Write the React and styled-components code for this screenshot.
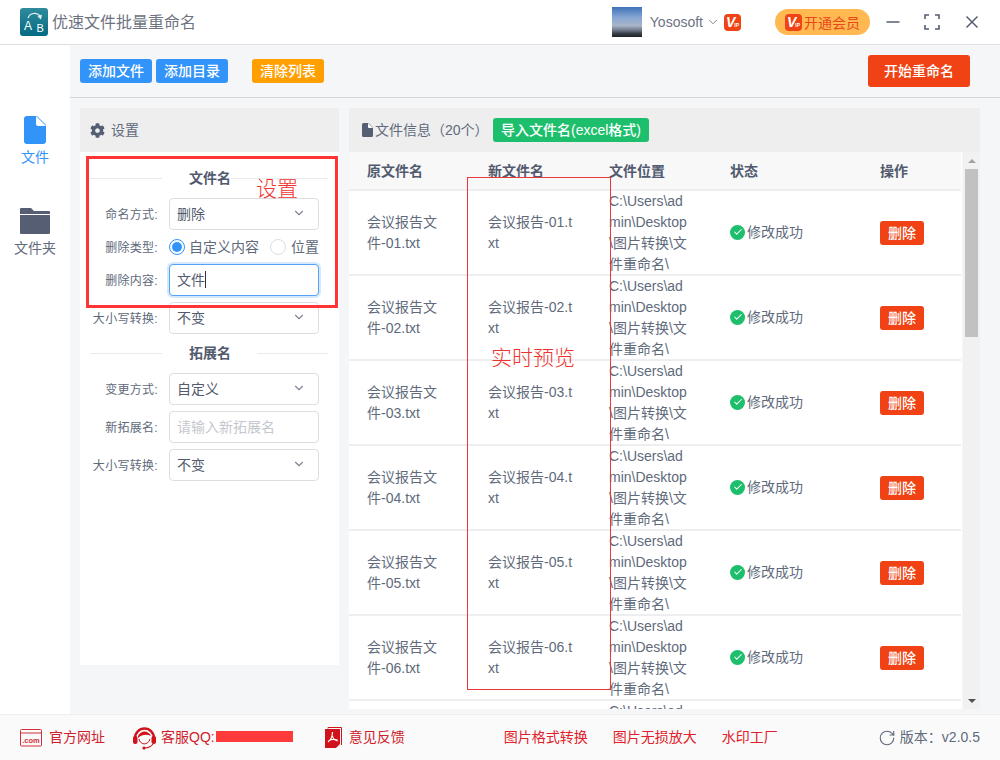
import React from "react";
import styled, { createGlobalStyle } from "styled-components";
import { ChevronDown, RotateCw, Check } from "lucide-react";
import { FaCog } from "react-icons/fa";

const Global = createGlobalStyle`
  html, body { margin: 0; padding: 0; background: #fff; }
  * { box-sizing: border-box; }
  body { font-family: "Liberation Sans", "Noto Sans CJK SC", sans-serif; color: #606a7b; font-size: 14px; }
`;

const Page = styled.div`
  position: relative; width: 1000px; height: 760px; overflow: hidden;
  display: flex; flex-direction: column; background: #fff;
`;

/* title bar */
const TitleBar = styled.header`
  height: 45px; flex: none; display: flex; align-items: center; padding-right: 20px;
  border-bottom: 1px solid #dcdee2; background: #fff;
`;
const LogoWrap = styled.div`margin-left: 20px; width: 28px; height: 28px; flex: none;`;
const AppName = styled.div`margin-left: 4px; font-size: 16px; color: #6d7382; flex: 1; padding-bottom: 2px;`;
const Avatar = styled.div`
  width: 30px; height: 30px; flex: none;
  background: linear-gradient(180deg, #3f72b8 0%, #86a6d4 35%, #a9b4c8 62%, #6b7585 78%, #39404a 88%, #1e2226 100%);
`;
const UserName = styled.div`margin-left: 8px; color: #6d7382; font-size: 14px; display: flex; align-items: center; gap: 3px;`;
const VipBadge = styled.div`
  width: 17px; height: 17px; border-radius: 4px; background: #f04215; flex: none;
  color: #fff; display: flex; align-items: center; justify-content: center; overflow: hidden;
  margin-left: ${p => p.$ml || 0}px;
`;
const VipV = styled.span`font: italic 700 14px "Liberation Sans", sans-serif; line-height: 1;`;
const VipIP = styled.span`font: 700 5px "Liberation Sans", sans-serif; margin-top: 6px; margin-left: -1px;`;
const MemberPill = styled.div`
  margin-left: 34px; width: 95px; height: 26px; border-radius: 13px; background: #ffb950; flex: none;
  display: flex; align-items: center; padding-left: 10px; gap: 2px; color: #e8471a; font-size: 14px;
`;
const WinBtn = styled.svg`width: 16px; height: 16px; flex: none; margin-left: ${p => p.$ml}px; display: block;`;

/* body */
const Body = styled.div`flex: 1; min-height: 0; display: flex;`;
const Side = styled.nav`width: 70px; flex: none; display: flex; flex-direction: column; align-items: center; padding-top: 70px; background: #fff;`;
const SideItem = styled.div`
  display: flex; flex-direction: column; align-items: center; height: 91px; gap: 1px;
  color: ${p => p.$active ? "#3293f8" : "#606a7b"}; font-size: 14px;
`;
const SideIconBox = styled.div`height: 30px; display: flex; align-items: center; justify-content: center;`;
const Main = styled.main`flex: 1; min-width: 0; background: #f5f6f8; display: flex; flex-direction: column;`;
const Toolbar = styled.div`
  height: 53px; flex: none; border-bottom: 1px solid #d4d6da; display: flex; align-items: center;
  padding: 0 30px 0 10px;
`;
const Btn = styled.button`
  border: 0; border-radius: 3px; color: #fff; font: 500 14px "Liberation Sans", "Noto Sans CJK SC", sans-serif;
  height: ${p => p.$h || 24}px; padding: 0 ${p => p.$px || 8}px; background: ${p => p.$bg};
  margin-left: ${p => p.$ml || 0}px; white-space: nowrap; line-height: 1; flex: none;
`;
const Spacer = styled.div`flex: 1;`;
const Panels = styled.div`flex: 1; min-height: 0; display: flex; gap: 10px; padding: 10px 20px 5px 10px;`;
const PanelHead = styled.div`
  height: 44px; flex: none; background: #eeeeef; display: flex; align-items: center; color: #606a7b; font-size: 14px;
`;
const HeadText = styled.span`padding-bottom: 3px; white-space: nowrap;`;

/* settings panel */
const Settings = styled.section`width: 259px; flex: none; display: flex; flex-direction: column; height: 557px;`;
const SettingsHead = styled(PanelHead)`padding-left: 10px; gap: 6px;`;
const Form = styled.div`flex: 1; background: #fff; padding: 16px 11px 0 10px;`;
const SectionTitle = styled.div`
  display: flex; align-items: center; height: 20px; margin: ${p => p.$mt || 0}px 0 10px;
  font-weight: 700; font-size: 14px; color: #515a6e;
  &::before { content: ""; flex: none; width: 72px; height: 1px; background: #e8eaec; }
  &::after { content: ""; flex: 1; height: 1px; background: #e8eaec; margin-left: ${p => p.$r}px; }
  span { margin-left: 27px; padding-bottom: 2px; }
`;
const Row = styled.div`
  display: flex; align-items: center; height: ${p => p.$h || 32}px; margin-bottom: 6px;
`;
const Label = styled.div`
  width: 68px; text-align: right; font-size: 12px; letter-spacing: .3px; color: #606a7b;
  white-space: nowrap; flex: none; padding-bottom: 2px;
`;
const Field = styled.div`
  margin-left: 11px; width: 150px; height: 32px; flex: none; border-radius: 4px; background: #fff;
  border: 1px solid ${p => p.$focus ? "#57a3f3" : "#dcdee2"};
  box-shadow: ${p => p.$focus ? "0 0 0 2px rgba(45,140,240,.2)" : "none"};
  display: flex; align-items: center; padding: 0 12px 2px 7px; font-size: 14px; justify-content: space-between;
  color: ${p => p.$ph ? "#c5c8ce" : "#515a6e"};
`;
const Caret = styled.i`display: inline-block; width: 1px; height: 17px; background: #333; vertical-align: -3px;`;
const Radios = styled.div`margin-left: 11px; width: 150px; display: flex; align-items: center; font-size: 14px; color: #606a7b; white-space: nowrap;`;
const RadioDot = styled.span`
  width: 16px; height: 16px; border-radius: 50%; flex: none; margin-right: ${p => p.$mr}px;
  border: 1px solid ${p => p.$on ? "#3293f8" : "#dcdee2"}; background: #fff; display: flex; align-items: center; justify-content: center;
  &::after { content: ""; width: 10px; height: 10px; border-radius: 50%; background: ${p => p.$on ? "#3293f8" : "transparent"}; }
`;
const RadioText = styled.span`margin-right: ${p => p.$mr || 0}px; padding-bottom: 2px;`;

/* table panel */
const Files = styled.section`flex: 1; min-width: 0; display: flex; flex-direction: column;`;
const FilesHead = styled(PanelHead)`padding-left: 13px; flex: none;`;
const FilesTitle = styled(HeadText)`margin-left: 2px; width: 118px;`;
const TableWrap = styled.div`flex: 1; min-height: 0; display: flex;`;
const TableArea = styled.div`flex: 1; min-width: 0; overflow: hidden; background: #fff;`;
const GridRow = styled.div`
  display: grid; grid-template-columns: 121px 121px 121px 150px 1fr;
  align-items: center; border-bottom: 2px solid #eceef0;
  height: ${p => p.$h}px; background: ${p => p.$head ? "#f8f8f9" : "#fff"};
  padding-top: ${p => p.$head ? 1 : 0}px;
  font-weight: ${p => p.$head ? 700 : 400}; color: ${p => p.$head ? "#515a6e" : "#606a7b"};
  width: 612px;
`;
const Cell = styled.div`padding: 0 18.6px 0 18px; line-height: 21px; word-break: break-all; font-size: 14px;`;
const StatusCell = styled(Cell)`display: flex; align-items: center; padding-right: 0; padding-bottom: 2px; white-space: nowrap; gap: 2px;`;
const OkIcon = styled.span`
  width: 15px; height: 15px; border-radius: 50%; background: #1dbf6c; color: #fff; flex: none;
  display: flex; align-items: center; justify-content: center;
`;
const DelBtn = styled(Btn)`width: 44px; padding: 0; background: #f04215; display: block; border-radius: 3px;`;
const Scrollbar = styled.div`width: 17px; flex: none; background: #f1f1f1; display: flex; flex-direction: column; align-items: center; margin-left: 1px;`;
const ArrowBtn = styled.div`
  height: 17px; width: 100%; flex: none; display: flex; align-items: center; justify-content: center;
  &::after {
    content: ""; width: 0; height: 0; border-left: 4px solid transparent; border-right: 4px solid transparent;
    ${p => p.$down ? "border-top: 4px solid #505050;" : "border-bottom: 4px solid #a3a3a3;"}
  }
`;
const Thumb = styled.div`width: 13px; height: 168px; background: #c1c1c1; flex: none;`;
const ScrollGap = styled.div`flex: 1;`;

/* footer */
const Footer = styled.footer`
  height: 46px; flex: none; background: #fafafa; border-top: 1px solid #eceef0; display: flex; align-items: center;
  font-size: 14px;
`;
const FootLink = styled.div`
  color: ${p => p.$c || "#d0202a"}; margin-left: ${p => p.$ml}px; display: flex; align-items: center; gap: ${p => p.$gap ?? 6}px;
  white-space: nowrap; flex: none;
`;
const FootText = styled.span`padding-bottom: 3px; display: flex; align-items: center;`;
const Redacted = styled.span`display: inline-block; width: 77px; height: 11px; background: #ff3a3a; margin: 1px 0 0 1px;`;
const Version = styled.div`margin-left: auto; margin-right: 20px; display: flex; align-items: center; gap: 4px; color: #606a7b; white-space: nowrap;`;

/* annotations lying over the screenshot */
const MarkBox = styled.div`position: absolute; border: 3px solid #ff3434; left: 86px; top: 156px; width: 252px; height: 152px; pointer-events: none;`;
const PreviewBox = styled.div`position: absolute; border: 1px solid #e8383b; left: 467px; top: 177px; width: 144px; height: 513px; pointer-events: none;`;
const Note = styled.div`
  position: absolute; color: #f0322e; font-size: ${p => p.$s}px; left: ${p => p.$x}px; top: ${p => p.$y}px;
  font-weight: 300; line-height: 1; white-space: nowrap;
`;

const AppLogo = () => (
  <svg width="28" height="28" viewBox="0 0 28 28">
    <defs>
      <linearGradient id="lg" x1="0" y1="0" x2="0" y2="1">
        <stop offset="0" stopColor="#2f8b9c" /><stop offset="1" stopColor="#046a83" />
      </linearGradient>
    </defs>
    <rect width="28" height="28" rx="3" fill="url(#lg)" />
    <path d="M8 10 A7 7 0 0 1 20 8" fill="none" stroke="#e8f3f5" strokeWidth="1.2" />
    <path d="M17.5 8.5 L22 6.5 L21 11.5 Z" fill="#e8f3f5" />
    <text x="4" y="22" fontSize="12" fill="#fff" fontFamily="Liberation Sans">A</text>
    <text x="16.5" y="23.5" fontSize="11" fill="#fff" fontFamily="Liberation Sans">B</text>
  </svg>
);

const FileIcon = ({ w = 22, h = 28, c = "#3293f8" }) => (
  <svg width={w} height={h} viewBox="0 0 22 28">
    <path d="M3 0 H13 L22 9 V25 A3 3 0 0 1 19 28 H3 A3 3 0 0 1 0 25 V3 A3 3 0 0 1 3 0 Z" fill={c} />
    <path d="M12 0 L22 10 H14 A2 2 0 0 1 12 8 Z" fill="#fff" />
  </svg>
);
const FolderIcon = () => (
  <svg width="30" height="26" viewBox="0 0 30 26">
    <path d="M1 0 H11 L14 3 H29 A1 1 0 0 1 30 4 V6 H0 V1 A1 1 0 0 1 1 0 Z" fill="#555e73" />
    <path d="M0 7 H30 V25 A1 1 0 0 1 29 26 H1 A1 1 0 0 1 0 25 Z" fill="#555e73" />
  </svg>
);
const Headset = () => (
  <svg width="23" height="24" viewBox="0 0 23 24">
    <path d="M2 12 A9.5 9.5 0 0 1 21 12" fill="none" stroke="#d0121b" strokeWidth="2.4" />
    <path d="M5 10 C8 4 15 4 18 10 C14 8 9 8 5 12 Z" fill="#d0121b" />
    <rect x="0" y="10" width="4.5" height="8" rx="2" fill="#d0121b" />
    <rect x="18.5" y="10" width="4.5" height="8" rx="2" fill="#d0121b" />
    <path d="M6 13 C7 19 15 20 17 13" fill="none" stroke="#d0121b" strokeWidth="1" />
    <path d="M20 18 C18 21 15 22 11 22" fill="none" stroke="#d0121b" strokeWidth="1.2" />
    <circle cx="11" cy="22" r="1.6" fill="#d0121b" />
  </svg>
);
const PdfIcon = () => (
  <svg width="17" height="22" viewBox="0 0 17 22">
    <path d="M3 1.5 V0.5 H16.5 V18" fill="none" stroke="#d0121b" strokeWidth="1" />
    <path d="M0 2 H15 V17 L11 21 H0 Z" fill="#d0121b" />
    <path d="M7.5 5 C7.5 9 7 12 3 15 M7.5 9 C8 12 10 13.5 13 14 M3.5 14 C6 12 9 12 12.5 13" fill="none" stroke="#fff" strokeWidth="1.2" />
  </svg>
);
const ComIcon = () => (
  <svg width="22" height="18" viewBox="0 0 22 18">
    <rect x="0.5" y="0.5" width="21" height="16.5" rx="1" fill="none" stroke="#d0303a" />
    <line x1="0.5" y1="4" x2="21.5" y2="4" stroke="#d0303a" />
    <text x="11" y="14" textAnchor="middle" fontSize="7.5" fontWeight="700" fill="#d0303a" fontFamily="Liberation Sans">.com</text>
  </svg>
);

const Vip = ({ ml }) => (
  <VipBadge $ml={ml}><VipV>V</VipV><VipIP>IP</VipIP></VipBadge>
);

const rows = ["01", "02", "03", "04", "05", "06", "07"];
const chevron = <ChevronDown size={14} color="#808695" />;

export default function App() {
  return (
    <Page>
      <Global />
      <TitleBar>
        <LogoWrap><AppLogo /></LogoWrap>
        <AppName>优速文件批量重命名</AppName>
        <Avatar />
        <UserName>Yososoft<ChevronDown size={14} strokeWidth={1.5} color="#6d7382" /></UserName>
        <Vip ml={4} />
        <MemberPill><Vip />开通会员</MemberPill>
        <WinBtn $ml={15} viewBox="0 0 16 16"><path d="M1.5 8 H14.5" stroke="#555e73" strokeWidth="1.5" /></WinBtn>
        <WinBtn $ml={23} viewBox="0 0 16 16">
          <path d="M1 5 V1 H5 M11 1 H15 V5 M15 11 V15 H11 M5 15 H1 V11" fill="none" stroke="#555e73" strokeWidth="1.6" />
        </WinBtn>
        <WinBtn $ml={24} viewBox="0 0 16 16"><path d="M2.5 2.5 L13.5 13.5 M13.5 2.5 L2.5 13.5" stroke="#555e73" strokeWidth="1.5" /></WinBtn>
      </TitleBar>
      <Body>
        <Side>
          <SideItem $active>
            <SideIconBox><FileIcon /></SideIconBox>
            文件
          </SideItem>
          <SideItem>
            <SideIconBox><FolderIcon /></SideIconBox>
            文件夹
          </SideItem>
        </Side>
        <Main>
          <Toolbar>
            <Btn $bg="#3293f8">添加文件</Btn>
            <Btn $bg="#3293f8" $ml={4}>添加目录</Btn>
            <Btn $bg="#ff9f00" $ml={24}>清除列表</Btn>
            <Spacer />
            <Btn $bg="#f04215" $h={32} $px={16}>开始重命名</Btn>
          </Toolbar>
          <Panels>
            <Settings>
              <SettingsHead><FaCog size={15} color="#555e73" /><HeadText>设置</HeadText></SettingsHead>
              <Form>
                <SectionTitle $r={0}><span>文件名</span></SectionTitle>
                <Row><Label>命名方式:</Label><Field>删除{chevron}</Field></Row>
                <Row $h={22}>
                  <Label>删除类型:</Label>
                  <Radios>
                    <RadioDot $on $mr={4} /><RadioText $mr={11}>自定义内容</RadioText>
                    <RadioDot $mr={5} /><RadioText>位置</RadioText>
                  </Radios>
                </Row>
                <Row><Label>删除内容:</Label><Field $focus><span>文件<Caret /></span></Field></Row>
                <Row><Label>大小写转换:</Label><Field>不变{chevron}</Field></Row>
                <SectionTitle $mt={9} $r={26}><span>拓展名</span></SectionTitle>
                <Row><Label>变更方式:</Label><Field>自定义{chevron}</Field></Row>
                <Row><Label>新拓展名:</Label><Field $ph>请输入新拓展名</Field></Row>
                <Row><Label>大小写转换:</Label><Field>不变{chevron}</Field></Row>
              </Form>
            </Settings>
            <Files>
              <FilesHead>
                <FileIcon w={11} h={14} c="#555e73" />
                <FilesTitle>文件信息（20个）</FilesTitle>
                <Btn $bg="#1dbf6c">导入文件名(excel格式)</Btn>
              </FilesHead>
              <TableWrap>
                <TableArea>
                  <GridRow $head $h={39}>
                    <Cell>原文件名</Cell><Cell>新文件名</Cell><Cell>文件位置</Cell>
                    <Cell>状态</Cell><Cell>操作</Cell>
                  </GridRow>
                  {rows.map(n => (
                    <GridRow key={n} $h={85}>
                      <Cell>会议报告文件-{n}.txt</Cell>
                      <Cell>会议报告-{n}.txt</Cell>
                      <Cell>C:\Users\admin\Desktop\图片转换\文件重命名\</Cell>
                      <StatusCell><OkIcon><Check size={10} strokeWidth={2.5} /></OkIcon>修改成功</StatusCell>
                      <Cell><DelBtn>删除</DelBtn></Cell>
                    </GridRow>
                  ))}
                </TableArea>
                <Scrollbar>
                  <ArrowBtn /><Thumb /><ScrollGap /><ArrowBtn $down />
                </Scrollbar>
              </TableWrap>
            </Files>
          </Panels>
        </Main>
      </Body>
      <Footer>
        <FootLink $ml={20} $gap={7}><ComIcon /><FootText>官方网址</FootText></FootLink>
        <FootLink $ml={28} $gap={5}><Headset /><FootText>客服QQ:<Redacted /></FootText></FootLink>
        <FootLink $ml={32} $gap={7}><PdfIcon /><FootText>意见反馈</FootText></FootLink>
        <FootLink $ml={99} $c="#e0202a"><FootText>图片格式转换</FootText></FootLink>
        <FootLink $ml={25} $c="#e0202a"><FootText>图片无损放大</FootText></FootLink>
        <FootLink $ml={25} $c="#e0202a"><FootText>水印工厂</FootText></FootLink>
        <Version><RotateCw size={18} strokeWidth={1.5} color="#606a7b" /><FootText>版本：v2.0.5</FootText></Version>
      </Footer>
      <MarkBox />
      <PreviewBox />
      <Note $s={21} $x={256} $y={178}>设置</Note>
      <Note $s={21} $x={491} $y={347}>实时预览</Note>
    </Page>
  );
}
